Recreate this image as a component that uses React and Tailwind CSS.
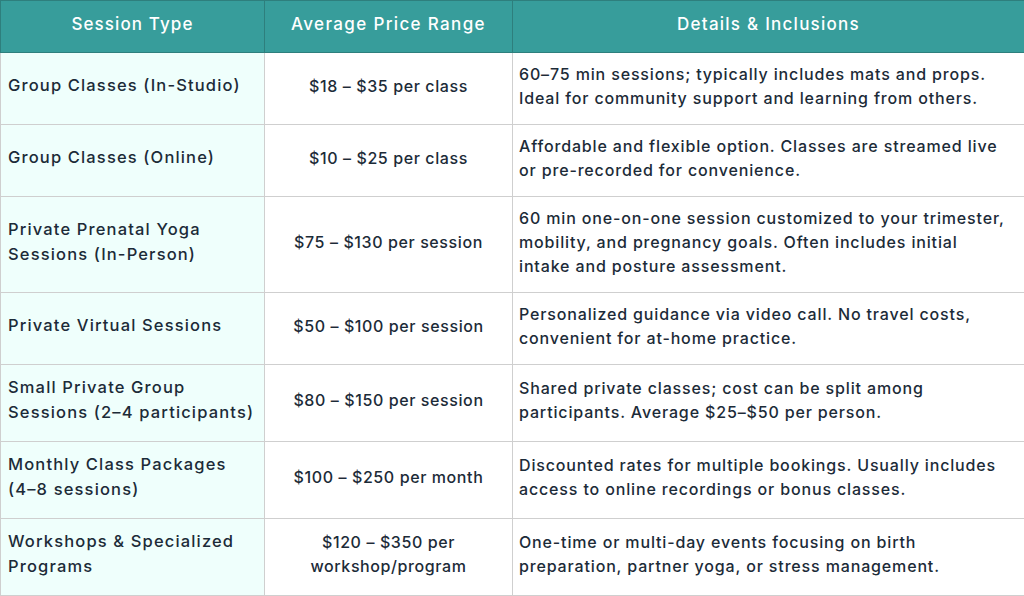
import React from "react";

const rows = [
  [["Group Classes (In-Studio)"], ["$18 – $35 per class"], ["60–75 min sessions; typically includes mats and props.", "Ideal for community support and learning from others."], "h-[72px]"],
  [["Group Classes (Online)"], ["$10 – $25 per class"], ["Affordable and flexible option. Classes are streamed live", "or pre-recorded for convenience."], "h-[72px]"],
  [["Private Prenatal Yoga", "Sessions (In-Person)"], ["$75 – $130 per session"], ["60 min one-on-one session customized to your trimester,", "mobility, and pregnancy goals. Often includes initial", "intake and posture assessment."], "h-[96px]"],
  [["Private Virtual Sessions"], ["$50 – $100 per session"], ["Personalized guidance via video call. No travel costs,", "convenient for at-home practice."], "h-[72px]"],
  [["Small Private Group", "Sessions (2–4 participants)"], ["$80 – $150 per session"], ["Shared private classes; cost can be split among", "participants. Average $25–$50 per person."], "h-[77px]"],
  [["Monthly Class Packages", "(4–8 sessions)"], ["$100 – $250 per month"], ["Discounted rates for multiple bookings. Usually includes", "access to online recordings or bonus classes."], "h-[77px]"],
  [["Workshops & Specialized", "Programs"], ["$120 – $350 per", "workshop/program"], ["One-time or multi-day events focusing on birth", "preparation, partner yoga, or stress management."], "h-[77px]"],
];

function Lines({ lines }) {
  return lines.map((l, i) => (
    <div key={i} className="whitespace-nowrap">{l}</div>
  ));
}

export default function App() {
  return (
    <div className="w-[1024px] h-[596px] bg-white overflow-hidden" style={{ fontFamily: "Inter, 'Noto Sans', sans-serif" }}>
      <table className="w-[1024px] border-collapse table-fixed text-[#1c2b38]">
        <colgroup>
          <col className="w-[264px]" />
          <col className="w-[248px]" />
          <col className="w-[512px]" />
        </colgroup>
        <thead>
          <tr className="h-[52px] bg-[#379d9b] text-white">
            <th className="border border-[#2e7f7d] font-medium text-[17px] tracking-[1.1px] text-center pb-[3px]">Session Type</th>
            <th className="border border-[#2e7f7d] font-medium text-[17px] tracking-[1.35px] text-center pb-[3px]">Average Price Range</th>
            <th className="border border-[#2e7f7d] font-medium text-[17px] tracking-[1.25px] text-center pb-[3px]">Details &amp; Inclusions</th>
          </tr>
        </thead>
        <tbody>
          {rows.map(([a, b, c, h]) => (
            <tr key={a[0]} className={h}>
              <td className="border border-[#cfcfcf] bg-[#effffc] pl-[7px] pb-[6px] text-[16.5px] tracking-[1.15px] font-medium leading-[25px] align-middle">
                <Lines lines={a} />
              </td>
              <td className="border border-[#cfcfcf] pb-[6px] text-center text-[16px] tracking-[0.6px] font-medium leading-[24px] align-middle">
                <Lines lines={b} />
              </td>
              <td className="border border-[#cfcfcf] pl-[6px] pb-[6px] text-[16px] tracking-[0.85px] font-medium leading-[24px] align-middle">
                <Lines lines={c} />
              </td>
            </tr>
          ))}
        </tbody>
      </table>
    </div>
  );
}
